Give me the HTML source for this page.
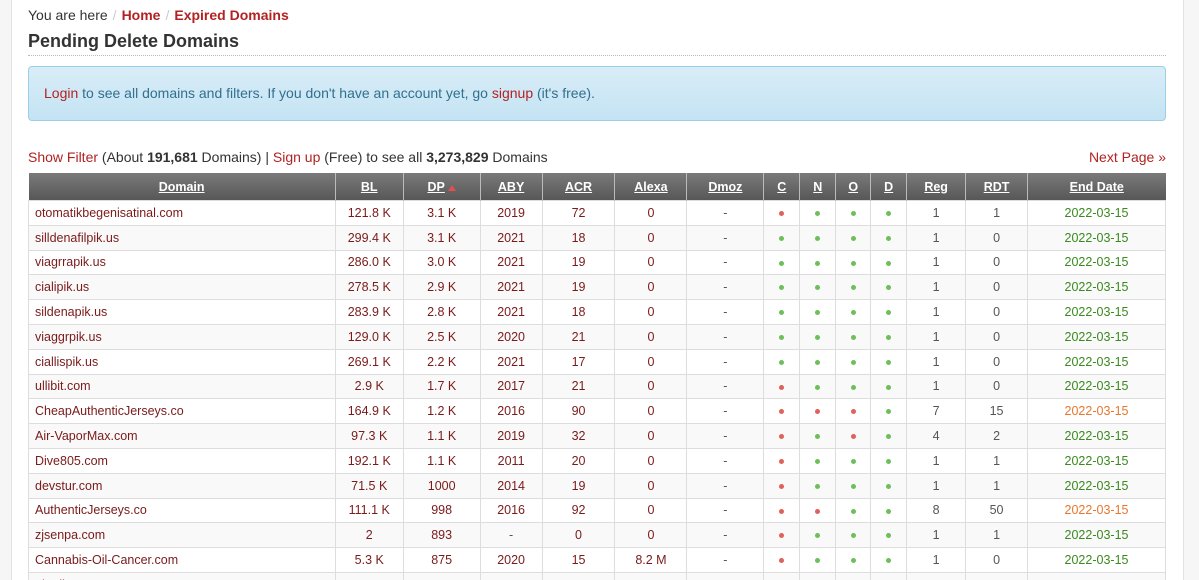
<!DOCTYPE html>
<html><head><meta charset="utf-8"><style>
html,body{margin:0;width:1199px;height:580px;overflow:hidden}
body{background:#fff;font-family:"Liberation Sans",Arial,sans-serif;position:relative}
.lb{position:absolute;left:0;top:0;width:11px;height:580px;background:#f6f6f6;border-right:1px solid #e2e2e2}
.rb{position:absolute;left:1183px;top:0;width:16px;height:580px;background:#f6f6f6;border-left:1px solid #e2e2e2}
.c{position:absolute;left:28px;top:0;width:1138px}
.bc{position:absolute;top:7px;font-size:14px;color:#333;white-space:nowrap}
.bc a{color:#b22222;font-weight:bold;text-decoration:none}
.bc .s{color:#ccc;margin:0 5px}
h1{position:absolute;top:31px;margin:0;font-size:18px;color:#333;font-weight:bold;white-space:nowrap}
.hr{position:absolute;top:55px;width:1138px;border-top:1px dotted #bbb}
.al{position:absolute;top:66px;left:0;width:1136px;height:53px;background:linear-gradient(#d9edf7,#c4e3f3);border:1px solid #9acfea;border-radius:4px;font-size:14px;color:#31708f;line-height:53px;text-indent:15px}
.al a{color:#b22222;text-decoration:none}
.info{position:absolute;top:149px;font-size:14px;color:#333;white-space:nowrap}
.info a{color:#b22222;text-decoration:none}
.np{position:absolute;top:149px;right:0;font-size:14px;color:#b22222}
table{position:absolute;top:173px;left:0;width:1138px;border-collapse:collapse;font-size:12.5px}
th{background:linear-gradient(#7a7a7a,#575757);color:#fff;height:27px;padding:0;text-decoration:underline;font-size:12.5px;border-left:1px solid #bbb}
th:first-child{border-left:none}
td{height:23.8px;padding:0;text-align:center;border:1px solid #ddd;color:#7a1a1a}
td:first-child{text-align:left;padding-left:6px}
tr:nth-child(odd) td{background:#f9f9f9}
td.g{color:#555}td.d{color:#3a8a1e}td.o{color:#e8772e}
i{display:inline-block;width:5px;height:5px;border-radius:50%;vertical-align:middle}
i.r{background:#e0605a}i.k{background:#6cbf5c}
.up{display:inline-block;width:0;height:0;border-left:4px solid transparent;border-right:4px solid transparent;border-bottom:6px solid #e05050;margin-left:3px}
</style></head><body>
<div class="lb"></div><div class="rb"></div>
<div class="c">
<div class="bc">You are here<span class="s">/</span><a>Home</a><span class="s">/</span><a>Expired Domains</a></div>
<h1>Pending Delete Domains</h1>
<div class="hr"></div>
<div class="al"><a>Login</a> to see all domains and filters. If you don't have an account yet, go <a>signup</a> (it's free).</div>
<div class="info"><a>Show Filter</a> (About <b>191,681</b> Domains) | <a>Sign up</a> (Free) to see all <b>3,273,829</b> Domains</div>
<div class="np">Next Page »</div>
<table>
<colgroup><col style="width:307px"><col style="width:68px"><col style="width:77px"><col style="width:62px"><col style="width:73px"><col style="width:72px"><col style="width:77px"><col style="width:36px"><col style="width:36px"><col style="width:35px"><col style="width:36px"><col style="width:59px"><col style="width:62px"><col style="width:138px"></colgroup>
<tr><th>Domain</th><th>BL</th><th>DP<span class="up"></span></th><th>ABY</th><th>ACR</th><th>Alexa</th><th>Dmoz</th><th>C</th><th>N</th><th>O</th><th>D</th><th>Reg</th><th>RDT</th><th>End Date</th></tr>
<tr><td>otomatikbegenisatinal.com</td><td>121.8 K</td><td>3.1 K</td><td>2019</td><td>72</td><td>0</td><td class="g">-</td><td><i class="r"></i></td><td><i class="k"></i></td><td><i class="k"></i></td><td><i class="k"></i></td><td class="g">1</td><td class="g">1</td><td class="d">2022-03-15</td></tr>
<tr><td>silldenafilpik.us</td><td>299.4 K</td><td>3.1 K</td><td>2021</td><td>18</td><td>0</td><td class="g">-</td><td><i class="k"></i></td><td><i class="k"></i></td><td><i class="k"></i></td><td><i class="k"></i></td><td class="g">1</td><td class="g">0</td><td class="d">2022-03-15</td></tr>
<tr><td>viagrrapik.us</td><td>286.0 K</td><td>3.0 K</td><td>2021</td><td>19</td><td>0</td><td class="g">-</td><td><i class="k"></i></td><td><i class="k"></i></td><td><i class="k"></i></td><td><i class="k"></i></td><td class="g">1</td><td class="g">0</td><td class="d">2022-03-15</td></tr>
<tr><td>cialipik.us</td><td>278.5 K</td><td>2.9 K</td><td>2021</td><td>19</td><td>0</td><td class="g">-</td><td><i class="k"></i></td><td><i class="k"></i></td><td><i class="k"></i></td><td><i class="k"></i></td><td class="g">1</td><td class="g">0</td><td class="d">2022-03-15</td></tr>
<tr><td>sildenapik.us</td><td>283.9 K</td><td>2.8 K</td><td>2021</td><td>18</td><td>0</td><td class="g">-</td><td><i class="k"></i></td><td><i class="k"></i></td><td><i class="k"></i></td><td><i class="k"></i></td><td class="g">1</td><td class="g">0</td><td class="d">2022-03-15</td></tr>
<tr><td>viaggrpik.us</td><td>129.0 K</td><td>2.5 K</td><td>2020</td><td>21</td><td>0</td><td class="g">-</td><td><i class="k"></i></td><td><i class="k"></i></td><td><i class="k"></i></td><td><i class="k"></i></td><td class="g">1</td><td class="g">0</td><td class="d">2022-03-15</td></tr>
<tr><td>ciallispik.us</td><td>269.1 K</td><td>2.2 K</td><td>2021</td><td>17</td><td>0</td><td class="g">-</td><td><i class="k"></i></td><td><i class="k"></i></td><td><i class="k"></i></td><td><i class="k"></i></td><td class="g">1</td><td class="g">0</td><td class="d">2022-03-15</td></tr>
<tr><td>ullibit.com</td><td>2.9 K</td><td>1.7 K</td><td>2017</td><td>21</td><td>0</td><td class="g">-</td><td><i class="r"></i></td><td><i class="k"></i></td><td><i class="k"></i></td><td><i class="k"></i></td><td class="g">1</td><td class="g">0</td><td class="d">2022-03-15</td></tr>
<tr><td>CheapAuthenticJerseys.co</td><td>164.9 K</td><td>1.2 K</td><td>2016</td><td>90</td><td>0</td><td class="g">-</td><td><i class="r"></i></td><td><i class="r"></i></td><td><i class="r"></i></td><td><i class="k"></i></td><td class="g">7</td><td class="g">15</td><td class="o">2022-03-15</td></tr>
<tr><td>Air-VaporMax.com</td><td>97.3 K</td><td>1.1 K</td><td>2019</td><td>32</td><td>0</td><td class="g">-</td><td><i class="r"></i></td><td><i class="k"></i></td><td><i class="r"></i></td><td><i class="k"></i></td><td class="g">4</td><td class="g">2</td><td class="d">2022-03-15</td></tr>
<tr><td>Dive805.com</td><td>192.1 K</td><td>1.1 K</td><td>2011</td><td>20</td><td>0</td><td class="g">-</td><td><i class="r"></i></td><td><i class="k"></i></td><td><i class="k"></i></td><td><i class="k"></i></td><td class="g">1</td><td class="g">1</td><td class="d">2022-03-15</td></tr>
<tr><td>devstur.com</td><td>71.5 K</td><td>1000</td><td>2014</td><td>19</td><td>0</td><td class="g">-</td><td><i class="r"></i></td><td><i class="k"></i></td><td><i class="k"></i></td><td><i class="k"></i></td><td class="g">1</td><td class="g">1</td><td class="d">2022-03-15</td></tr>
<tr><td>AuthenticJerseys.co</td><td>111.1 K</td><td>998</td><td>2016</td><td>92</td><td>0</td><td class="g">-</td><td><i class="r"></i></td><td><i class="r"></i></td><td><i class="k"></i></td><td><i class="k"></i></td><td class="g">8</td><td class="g">50</td><td class="o">2022-03-15</td></tr>
<tr><td>zjsenpa.com</td><td>2</td><td>893</td><td class="g">-</td><td>0</td><td>0</td><td class="g">-</td><td><i class="r"></i></td><td><i class="k"></i></td><td><i class="k"></i></td><td><i class="k"></i></td><td class="g">1</td><td class="g">1</td><td class="d">2022-03-15</td></tr>
<tr><td>Cannabis-Oil-Cancer.com</td><td>5.3 K</td><td>875</td><td>2020</td><td>15</td><td>8.2 M</td><td class="g">-</td><td><i class="r"></i></td><td><i class="k"></i></td><td><i class="k"></i></td><td><i class="k"></i></td><td class="g">1</td><td class="g">0</td><td class="d">2022-03-15</td></tr>
<tr><td>ahsdl.com</td><td>10.1 K</td><td>870</td><td>2015</td><td>8</td><td>0</td><td class="g">-</td><td><i class="r"></i></td><td><i class="k"></i></td><td><i class="k"></i></td><td><i class="k"></i></td><td class="g">1</td><td class="g">0</td><td class="d">2022-03-15</td></tr>
</table>
</div>
</body></html>
